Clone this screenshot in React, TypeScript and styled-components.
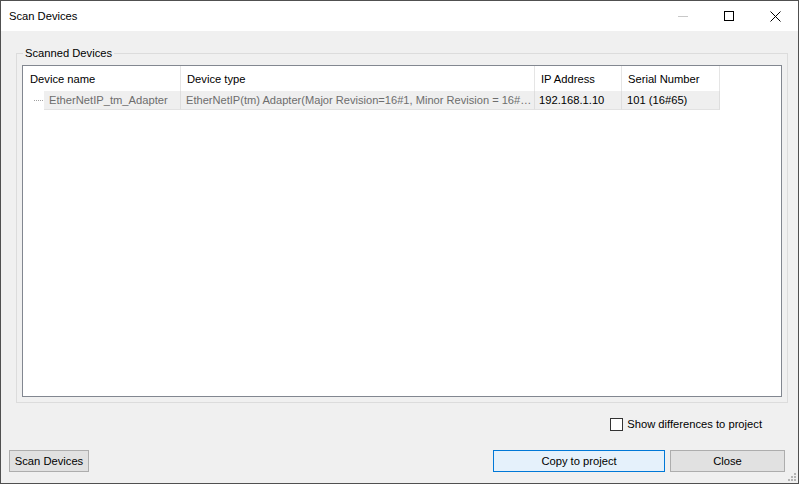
import React from "react";
import styled, { createGlobalStyle } from "styled-components";

const GlobalStyle = createGlobalStyle`
  html, body {
    margin: 0;
    padding: 0;
    overflow: hidden;
    background: #f0f0f0;
  }
  * { box-sizing: border-box; }
  body {
    font-family: "Liberation Sans", Arial, sans-serif;
    font-size: 11px;
    color: #000;
  }
`;

const Window = styled.div`
  position: relative;
  width: 799px;
  height: 484px;
  border: 1px solid #505050;
  background: #f0f0f0;
  display: flex;
  flex-direction: column;
`;

const TitleBar = styled.div`
  height: 30px;
  background: #fff;
  display: flex;
  align-items: center;
  flex-shrink: 0;
`;

const TitleText = styled.div`
  flex: 1;
  padding-left: 8px;
  font-size: 11.2px;
  line-height: 14px;
`;

const CaptionButton = styled.div`
  width: 46px;
  height: 30px;
  display: flex;
  align-items: center;
  justify-content: center;
`;

const Body = styled.div`
  flex: 1;
  display: flex;
  flex-direction: column;
  min-height: 0;
`;

const Group = styled.fieldset`
  flex: 1;
  min-height: 0;
  margin: 15px 10px 0 15px;
  padding: 5px;
  border: 1px solid #dcdcdc;
  display: flex;
  flex-direction: column;
  min-width: 0;
`;

const Legend = styled.legend`
  margin-left: 1px;
  padding: 0 2px;
  font-size: 11.2px;
  line-height: 14px;
`;

const ListView = styled.div`
  flex: 1;
  border: 1px solid #828790;
  background: #fff;
  display: flex;
  flex-direction: column;
  overflow: hidden;
`;

const HeaderRow = styled.div`
  display: flex;
  height: 25px;
  flex-shrink: 0;
  font-size: 11.2px;
`;

const HeaderCell = styled.div<{ $w: number; $pad?: number }>`
  width: ${(p) => p.$w}px;
  flex-shrink: 0;
  border-right: 1px solid #e5e5e5;
  padding-left: ${(p) => p.$pad ?? 6}px;
  display: flex;
  align-items: center;
  white-space: nowrap;
  overflow: hidden;
`;

const DataRow = styled.div`
  display: flex;
  height: 19px;
  flex-shrink: 0;
  font-size: 11.2px;
`;

const TreeCell = styled.div<{ $w: number }>`
  width: ${(p) => p.$w}px;
  flex-shrink: 0;
  display: flex;
`;

const TreeIndent = styled.div`
  width: 21px;
  flex-shrink: 0;
  display: flex;
  align-items: center;
  justify-content: flex-end;
  padding-bottom: 1px;
`;

const DottedLine = styled.div`
  width: 9px;
  margin-right: 1px;
  border-top: 1px dotted #a0a0a0;
`;

const Cell = styled.div<{ $w?: number; $muted?: boolean; $pad?: number; $tight?: boolean }>`
  ${(p) => (p.$w ? `width: ${p.$w}px; flex-shrink: 0;` : "flex: 1; min-width: 0;")}
  background: #efefef;
  border-right: 1px solid #dedede;
  border-bottom: 1px solid #e2e2e2;
  padding-left: ${(p) => p.$pad ?? 5}px;
  color: ${(p) => (p.$muted ? "#6d6d6d" : "#000")};
  display: flex;
  align-items: center;
  white-space: nowrap;
  overflow: hidden;
  ${(p) => (p.$tight ? "font-size: 11.1px;" : "")}
`;

const OptionsRow = styled.div`
  margin-top: 13px;
  height: 16px;
  display: flex;
  justify-content: flex-end;
  align-items: center;
  padding-right: 36px;
  flex-shrink: 0;
  font-size: 11.2px;
`;

const CheckBox = styled.div`
  width: 13px;
  height: 13px;
  border: 1px solid #333;
  background: #fff;
  margin-right: 4px;
`;

const Label = styled.span`
  line-height: 14px;
`;

const ButtonRow = styled.div`
  margin: 18px 13px 11px 8px;
  height: 22px;
  display: flex;
  flex-shrink: 0;
`;

const Spacer = styled.div`
  flex: 1;
`;

const Button = styled.div<{ $w: number; $primary?: boolean; $gap?: number }>`
  width: ${(p) => p.$w}px;
  height: 22px;
  margin-left: ${(p) => p.$gap ?? 0}px;
  border: 1px solid ${(p) => (p.$primary ? "#0078d7" : "#adadad")};
  background: ${(p) => (p.$primary ? "#e5f1fb" : "#e1e1e1")};
  display: flex;
  align-items: center;
  justify-content: center;
  font-size: 11.2px;
`;

const Grip = styled.svg`
  position: absolute;
  right: 1px;
  bottom: 1px;
`;

export default function App() {
  return (
    <>
      <GlobalStyle />
      <Window>
        <TitleBar>
          <TitleText>Scan Devices</TitleText>
          <CaptionButton>
            <svg width="10" height="10" viewBox="0 0 10 10">
              <line x1="0" y1="5.5" x2="10" y2="5.5" stroke="#c8c8c8" strokeWidth="1" />
            </svg>
          </CaptionButton>
          <CaptionButton>
            <svg width="10" height="10" viewBox="0 0 10 10">
              <rect x="0.5" y="0.5" width="9" height="9" fill="none" stroke="#000" strokeWidth="1" />
            </svg>
          </CaptionButton>
          <CaptionButton>
            <svg width="11" height="11" viewBox="0 0 11 11">
              <path d="M0.5 0.5 L10.5 10.5 M10.5 0.5 L0.5 10.5" stroke="#000" strokeWidth="1" />
            </svg>
          </CaptionButton>
        </TitleBar>
        <Body>
          <Group>
            <Legend>Scanned Devices</Legend>
            <ListView>
              <HeaderRow>
                <HeaderCell $w={158} $pad={7}>Device name</HeaderCell>
                <HeaderCell $w={354}>Device type</HeaderCell>
                <HeaderCell $w={87}>IP Address</HeaderCell>
                <HeaderCell $w={98}>Serial Number</HeaderCell>
              </HeaderRow>
              <DataRow>
                <TreeCell $w={158}>
                  <TreeIndent>
                    <DottedLine />
                  </TreeIndent>
                  <Cell $muted>EtherNetIP_tm_Adapter</Cell>
                </TreeCell>
                <Cell $w={354} $muted $tight>
                  EtherNetIP(tm) Adapter(Major Revision=16#1, Minor Revision = 16#…
                </Cell>
                <Cell $w={87} $pad={4}>192.168.1.10</Cell>
                <Cell $w={98} $pad={5}>101 (16#65)</Cell>
              </DataRow>
            </ListView>
          </Group>
          <OptionsRow>
            <CheckBox />
            <Label>Show differences to project</Label>
          </OptionsRow>
          <ButtonRow>
            <Button $w={80}>Scan Devices</Button>
            <Spacer />
            <Button $w={172} $primary>Copy to project</Button>
            <Button $w={115} $gap={5}>Close</Button>
          </ButtonRow>
        </Body>
        <Grip width="10" height="10" viewBox="0 0 10 10">
          <g fill="#b4b4b4">
            <rect x="7" y="1" width="2" height="2" />
            <rect x="4" y="4" width="2" height="2" />
            <rect x="7" y="4" width="2" height="2" />
            <rect x="1" y="7" width="2" height="2" />
            <rect x="4" y="7" width="2" height="2" />
            <rect x="7" y="7" width="2" height="2" />
          </g>
        </Grip>
      </Window>
    </>
  );
}
